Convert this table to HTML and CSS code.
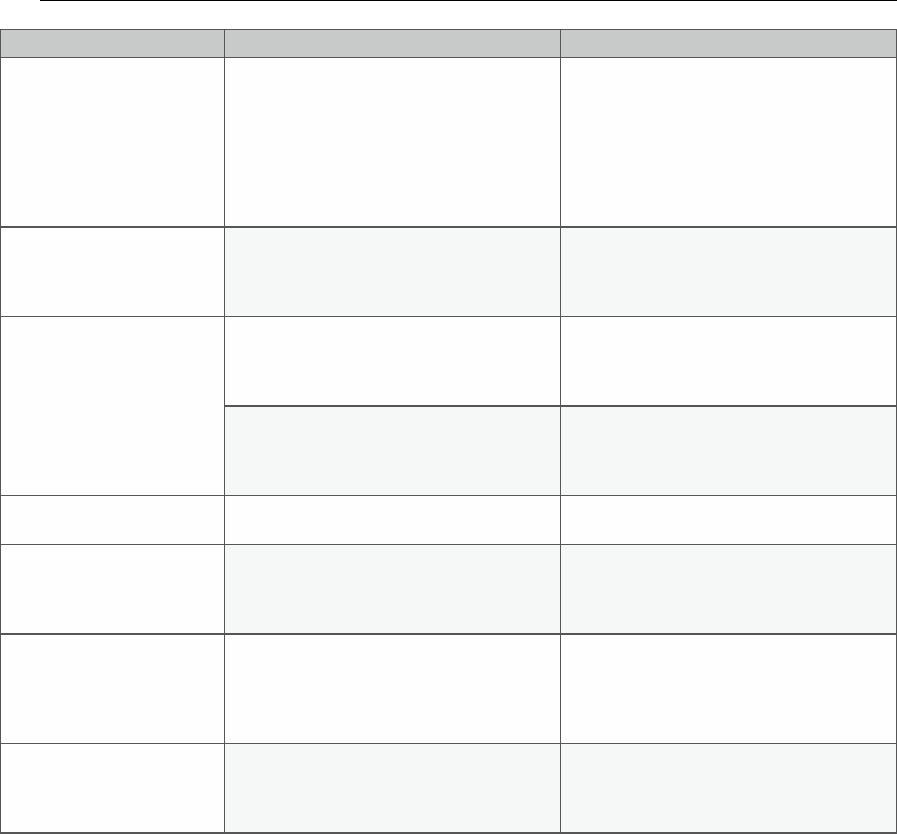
FILE: index.html
```html
<!DOCTYPE html>
<html lang="en">
<head>
<meta charset="utf-8">
<title>Table</title>
<link rel="stylesheet" href="styles.css">
</head>
<body>
<div class="rule"></div>
<div class="grid">
  <div class="cell head"></div>
  <div class="cell head"></div>
  <div class="cell head"></div>

  <div class="cell edge-bottom"></div>
  <div class="cell edge-bottom"></div>
  <div class="cell edge-bottom"></div>

  <div class="cell"></div>
  <div class="cell shade"></div>
  <div class="cell shade"></div>

  <div class="cell span2"></div>
  <div class="cell"></div>
  <div class="cell"></div>
  <div class="cell shade edge-top"></div>
  <div class="cell shade edge-top"></div>

  <div class="cell"></div>
  <div class="cell"></div>
  <div class="cell"></div>

  <div class="cell"></div>
  <div class="cell shade"></div>
  <div class="cell shade"></div>

  <div class="cell edge-top"></div>
  <div class="cell edge-top"></div>
  <div class="cell edge-top"></div>

  <div class="cell"></div>
  <div class="cell shade"></div>
  <div class="cell shade"></div>
</div>
</body>
</html>
```

FILE: styles.css
```css
html, body {
  margin: 0;
  padding: 0;
  background: #ffffff;
  overflow: hidden;
  font-family: "Liberation Sans", Arial, sans-serif;
}

.rule {
  height: 1px;
  margin-left: 40px;
  background: #000000;
}

.grid {
  margin-top: 28px;
  width: 897px;
  box-sizing: border-box;
  display: grid;
  grid-template-columns: 223px 335px 335px;
  grid-template-rows: 27px 169px 88px 88px 89px 48px 88px 109px 88px;
  gap: 1px;
  padding: 1px 1px 2px 1px;
  background: #565656;
}

.cell {
  background: #fefefe;
}

.head {
  background: #c8cac9;
}

.shade {
  background: #f6f7f7;
}

.span2 {
  grid-row: span 2;
}

.edge-bottom {
  box-shadow: inset 0 -1px 0 #565656;
}

.edge-top {
  box-shadow: inset 0 1px 0 #565656;
}
```
